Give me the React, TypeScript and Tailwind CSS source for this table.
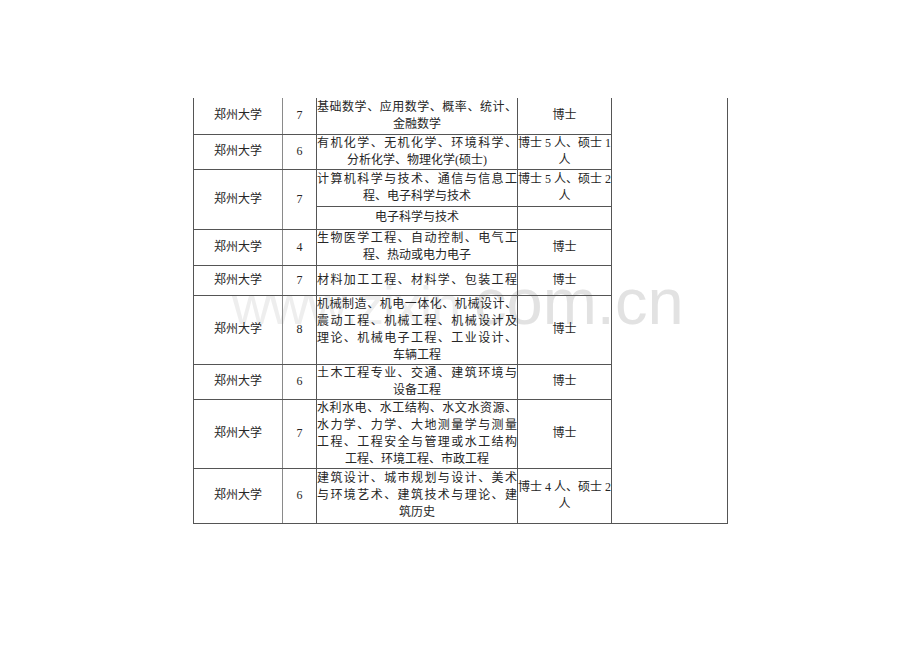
type Row = {
  n: string;
  major: string[];
  full?: number;
  deg: string[];
  h: string;
};

const rows: Row[] = [
  { n: "7", major: ["基础数学、应用数学、概率、统计、", "金融数学"], deg: ["博士"], h: "h-[36px]" },
  { n: "6", major: ["有机化学、无机化学、环境科学、", "分析化学、物理化学(硕士)"], deg: ["博士 5 人、硕士 1", "人"], h: "h-[35px]" },
  { n: "7", major: ["计算机科学与技术、通信与信息工", "程、电子科学与技术"], deg: ["博士 5 人、硕士 2", "人"], h: "h-[37px]" },
  { n: "", major: ["电子科学与技术"], deg: [], h: "h-[23px]" },
  { n: "4", major: ["生物医学工程、自动控制、电气工", "程、热动或电力电子"], deg: ["博士"], h: "h-[36px]" },
  { n: "7", major: ["材料加工工程、材料学、包装工程"], full: 1, deg: ["博士"], h: "h-[30px]" },
  {
    n: "8",
    major: ["机械制造、机电一体化、机械设计、", "震动工程、机械工程、机械设计及", "理论、机械电子工程、工业设计、", "车辆工程"],
    deg: ["博士"],
    h: "h-[69px]",
  },
  { n: "6", major: ["土木工程专业、交通、建筑环境与", "设备工程"], deg: ["博士"], h: "h-[35px]" },
  {
    n: "7",
    major: ["水利水电、水工结构、水文水资源、", "水力学、力学、大地测量学与测量", "工程、工程安全与管理或水工结构", "工程、环境工程、市政工程"],
    deg: ["博士"],
    h: "h-[68px]",
  },
  {
    n: "6",
    major: ["建筑设计、城市规划与设计、美术", "与环境艺术、建筑技术与理论、建", "筑历史"],
    deg: ["博士 4 人、硕士 2", "人"],
    h: "h-[55px]",
  },
];

const Lines = ({ lines, full }: { lines: string[]; full?: number }) => {
  const justified = full ?? lines.length - 1;
  return (
    <>
      {lines.map((l, i) => (
        <div key={i} className={i < justified ? "text-justify [text-align-last:justify]" : "text-center"}>
          {l}
        </div>
      ))}
    </>
  );
};

const cell = "border border-[#555] align-middle p-0";

const App = () => {
  return (
    <div
      className="relative h-[651px] w-[920px] bg-white pl-[193px] pt-[98px] text-[12px] leading-[17px] text-[#262626]"
      style={{ fontFamily: '"Liberation Serif", "Noto Sans CJK SC", serif' }}>
      {/* watermark */}
      <div
        className="pointer-events-none absolute left-[232px] top-[262px] flex items-baseline select-none leading-[80px] text-[#e2e2e2]"
        style={{ fontFamily: '"Liberation Sans", Arial, sans-serif' }}>
        <span className="text-[54px] tracking-[-1px] text-[#eeeeee]">www.zixin.</span>
        <span className="text-[65px]">com.cn</span>
      </div>

      <table className="relative w-[534px] table-fixed border-collapse">
        <colgroup>
          <col className="w-[89px]" />
          <col className="w-[34px]" />
          <col className="w-[201px]" />
          <col className="w-[94px]" />
          <col className="w-[116px]" />
        </colgroup>
        <tbody>
          {rows.map((r, i) => {
            const top = i === 0 ? " border-t-0" : "";
            const isSub = i === 3;
            return (
              <tr key={i} className={r.h}>
                {!isSub && (
                  <td rowSpan={i === 2 ? 2 : 1} className={`${cell} border-r-[#8a8a8a] text-center${top}`}>
                    郑州大学
                  </td>
                )}
                {!isSub && (
                  <td rowSpan={i === 2 ? 2 : 1} className={`${cell} text-center text-[13px]${top}`}>
                    {r.n}
                  </td>
                )}
                <td className={`${cell} px-[2px]${top}`}>
                  <Lines lines={r.major} full={r.full} />
                </td>
                <td className={`${cell} px-[1px]${top}`}>
                  <Lines lines={r.deg} />
                </td>
                {i === 0 && <td rowSpan={rows.length} className={`${cell} border-t-0`} />}
              </tr>
            );
          })}
        </tbody>
      </table>
    </div>
  );
};

export default App;
